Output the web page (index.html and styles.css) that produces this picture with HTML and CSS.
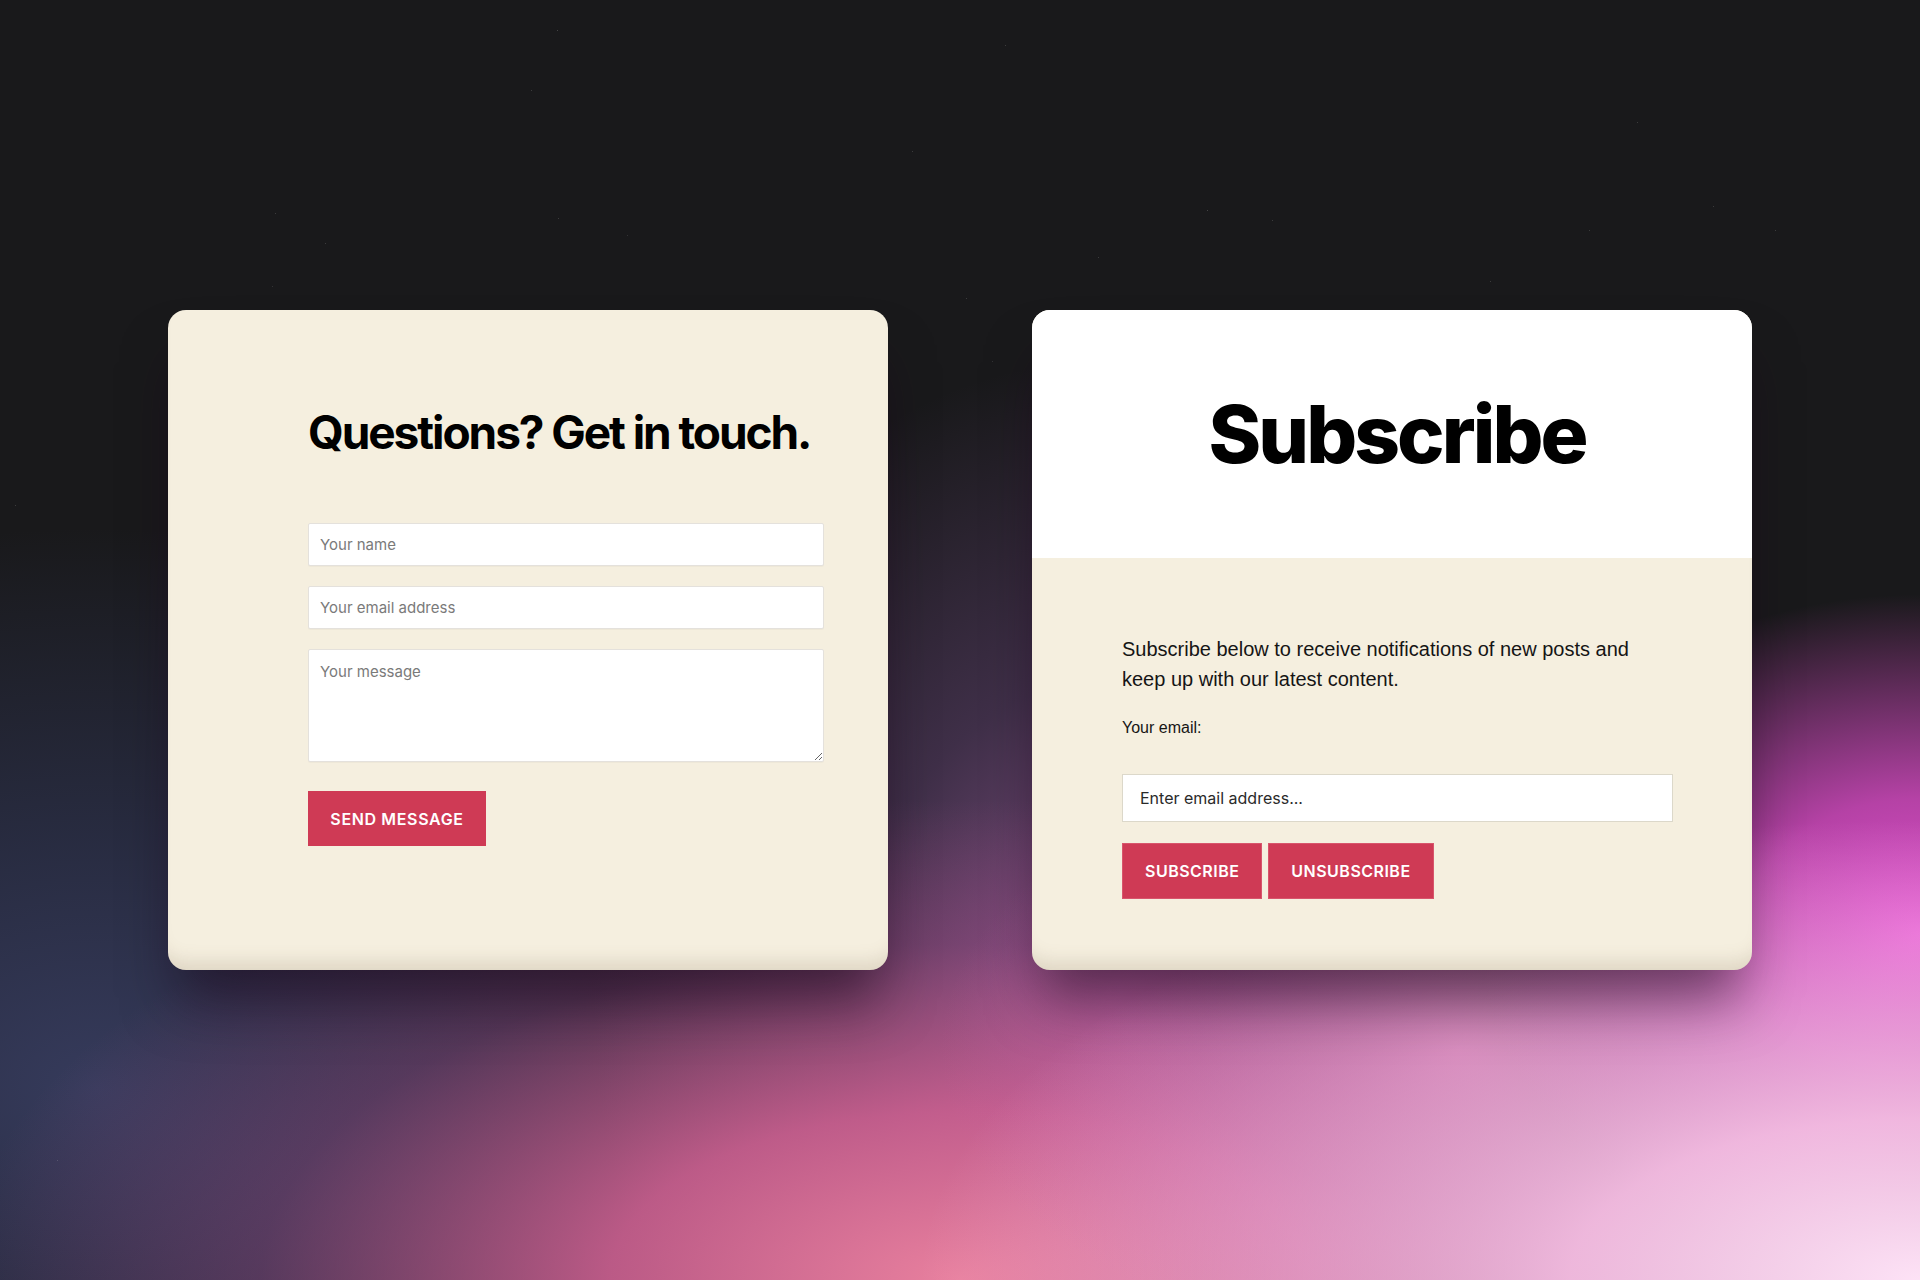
FILE: index.html
```html
<!DOCTYPE html>
<html lang="en">
<head>
<meta charset="utf-8">
<title>Forms</title>
<link rel="stylesheet" href="styles.css">
</head>
<body>
<div class="stars"></div>
<main class="stage">
  <section class="card contact">
    <h2 class="contact-title">Questions? Get in touch.</h2>
    <form class="contact-form">
      <input class="field" type="text" placeholder="Your name">
      <input class="field" type="email" placeholder="Your email address">
      <textarea class="field area" placeholder="Your message"></textarea>
      <button class="btn send" type="button">SEND MESSAGE</button>
    </form>
  </section>
  <section class="card subscribe">
    <header class="sub-head">
      <h2 class="sub-title">Subscribe</h2>
    </header>
    <div class="sub-body">
      <p class="sub-text">Subscribe below to receive notifications of new posts and keep up with our latest content.</p>
      <label class="sub-label">Your email:</label>
      <input class="sub-field" type="email" placeholder="Enter email address...">
      <div class="sub-actions">
        <button class="btn sub-btn" type="button">SUBSCRIBE</button>
        <button class="btn sub-btn unsub" type="button">UNSUBSCRIBE</button>
      </div>
    </div>
  </section>
</main>
</body>
</html>
```

FILE: styles.css
```css
* { box-sizing: border-box; }

html, body {
  margin: 0;
  padding: 0;
  width: 1920px;
  height: 1280px;
  overflow: hidden;
}

body {
  position: relative;
  font-family: Inter, "Liberation Sans", sans-serif;
  background:
    radial-gradient(ellipse 1000px 460px at 100% 100%, #fde2f6 0%, rgba(250,196,232,0.9) 35%, rgba(246,160,220,0) 100%),
    radial-gradient(ellipse 440px 340px at 100% 73%, #e452d2 0%, rgba(220,76,200,0.8) 40%, rgba(200,70,190,0) 100%),
    radial-gradient(ellipse 520px 300px at 76% 82%, rgba(214,110,176,0.8) 0%, rgba(200,100,170,0.4) 50%, rgba(200,100,170,0) 100%),
    radial-gradient(ellipse 1000px 480px at 50% 100%, #e8809e 0%, rgba(214,100,150,0.85) 35%, rgba(170,80,140,0.35) 70%, rgba(120,70,120,0) 100%),
    radial-gradient(ellipse 520px 640px at 58% 78%, rgba(150,90,150,0.9) 0%, rgba(120,80,140,0.4) 50%, rgba(80,60,110,0) 100%),
    radial-gradient(ellipse 760px 560px at 5% 85%, #363b5c 0%, rgba(46,51,80,0.7) 45%, rgba(30,34,50,0) 100%),
    #19191b;
}

.stars {
  position: absolute;
  left: 0;
  top: 0;
  width: 1px;
  height: 1px;
  border-radius: 50%;
  box-shadow:
    557px 30px rgba(255,255,255,0.25),
    1005px 45px rgba(255,255,255,0.2),
    531px 90px rgba(255,255,255,0.2),
    912px 151px rgba(255,255,255,0.2),
    1637px 122px rgba(255,255,255,0.2),
    275px 213px rgba(255,255,255,0.2),
    558px 218px rgba(255,255,255,0.2),
    1207px 210px rgba(255,255,255,0.25),
    1272px 220px rgba(255,255,255,0.2),
    1589px 230px rgba(255,255,255,0.2),
    1775px 230px rgba(255,255,255,0.2),
    627px 235px rgba(255,255,255,0.15),
    325px 243px rgba(255,255,255,0.2),
    1098px 257px rgba(255,255,255,0.2),
    1713px 206px rgba(255,255,255,0.2),
    1490px 281px rgba(255,255,255,0.2),
    272px 286px rgba(255,255,255,0.15),
    966px 298px rgba(255,255,255,0.2),
    15px 505px rgba(255,255,255,0.2),
    992px 361px rgba(255,255,255,0.15),
    57px 1160px rgba(255,255,255,0.2);
}

.stage {
  position: relative;
  display: flex;
  justify-content: center;
  align-items: center;
  gap: 144px;
  width: 1920px;
  height: 1280px;
}

.card {
  width: 720px;
  height: 660px;
  border-radius: 18px;
  background: #f5efdf;
  overflow: hidden;
  box-shadow:
    inset 0 -22px 18px -14px rgba(120,100,70,0.18),
    0 40px 55px -12px rgba(25,5,25,0.55);
}

/* Contact card */
.contact {
  padding: 95px 64px 0 140px;
}

.contact-title {
  margin: 0 0 63px;
  font-family: Inter, sans-serif;
  font-weight: 700;
  font-size: 46px;
  line-height: 55px;
  letter-spacing: -0.045em;
  white-space: nowrap;
  color: #000;
}

.contact-form {
  display: flex;
  flex-direction: column;
  align-items: flex-start;
}

.field {
  display: block;
  width: 516px;
  height: 43px;
  margin: 0 0 20px;
  padding: 0 11px;
  border: 1px solid #e4e1dc;
  border-radius: 2px;
  background: #fff;
  font-family: Inter, sans-serif;
  font-size: 15px;
  color: #333;
  outline: none;
  box-shadow: 0 1px 1px rgba(0,0,0,0.03);
}

.field::placeholder { color: #7a7a7a; }

.area {
  height: 113px;
  padding-top: 12px;
  margin-bottom: 29px;
  resize: vertical;
}

.btn {
  display: inline-flex;
  align-items: center;
  justify-content: center;
  border: 0;
  border-radius: 0;
  background: #cf3a55;
  color: #fff;
  font-family: Inter, sans-serif;
  font-weight: 600;
  font-size: 16px;
  letter-spacing: 0.04em;
  cursor: pointer;
}

.send {
  width: 178px;
  height: 55px;
  padding: 0;
}

/* Subscribe card */
.subscribe {
  display: flex;
  flex-direction: column;
}

.sub-head {
  height: 248px;
  background: #fff;
  display: flex;
  align-items: center;
  justify-content: center;
  padding-left: 10px;
}

.sub-title {
  margin: 0;
  font-family: Inter, sans-serif;
  font-weight: 800;
  font-size: 80px;
  line-height: 80px;
  letter-spacing: -0.037em;
  color: #000;
}

.sub-body {
  flex: 1;
  padding: 76px 79px 0 90px;
}

.sub-text {
  margin: 0 0 22px;
  font-family: "Liberation Sans", Arial, sans-serif;
  font-size: 20px;
  line-height: 30px;
  color: #151515;
}

.sub-label {
  display: block;
  margin: 0 0 34px;
  font-family: "Liberation Sans", Arial, sans-serif;
  font-size: 16px;
  line-height: 24px;
  color: #151515;
}

.sub-field {
  display: block;
  width: 100%;
  height: 48px;
  margin: 0 0 21px;
  padding: 0 17px;
  border: 1px solid #dcd8ca;
  background: #fff;
  font-family: Inter, sans-serif;
  font-size: 16px;
  color: #222;
  outline: none;
}

.sub-field::placeholder { color: #2a2a2a; }

.sub-actions {
  display: flex;
  gap: 6px;
}

.sub-btn {
  height: 56px;
  padding: 0 22px;
  letter-spacing: 0.03em;
  border: 1px solid #d8556c;
}
```
